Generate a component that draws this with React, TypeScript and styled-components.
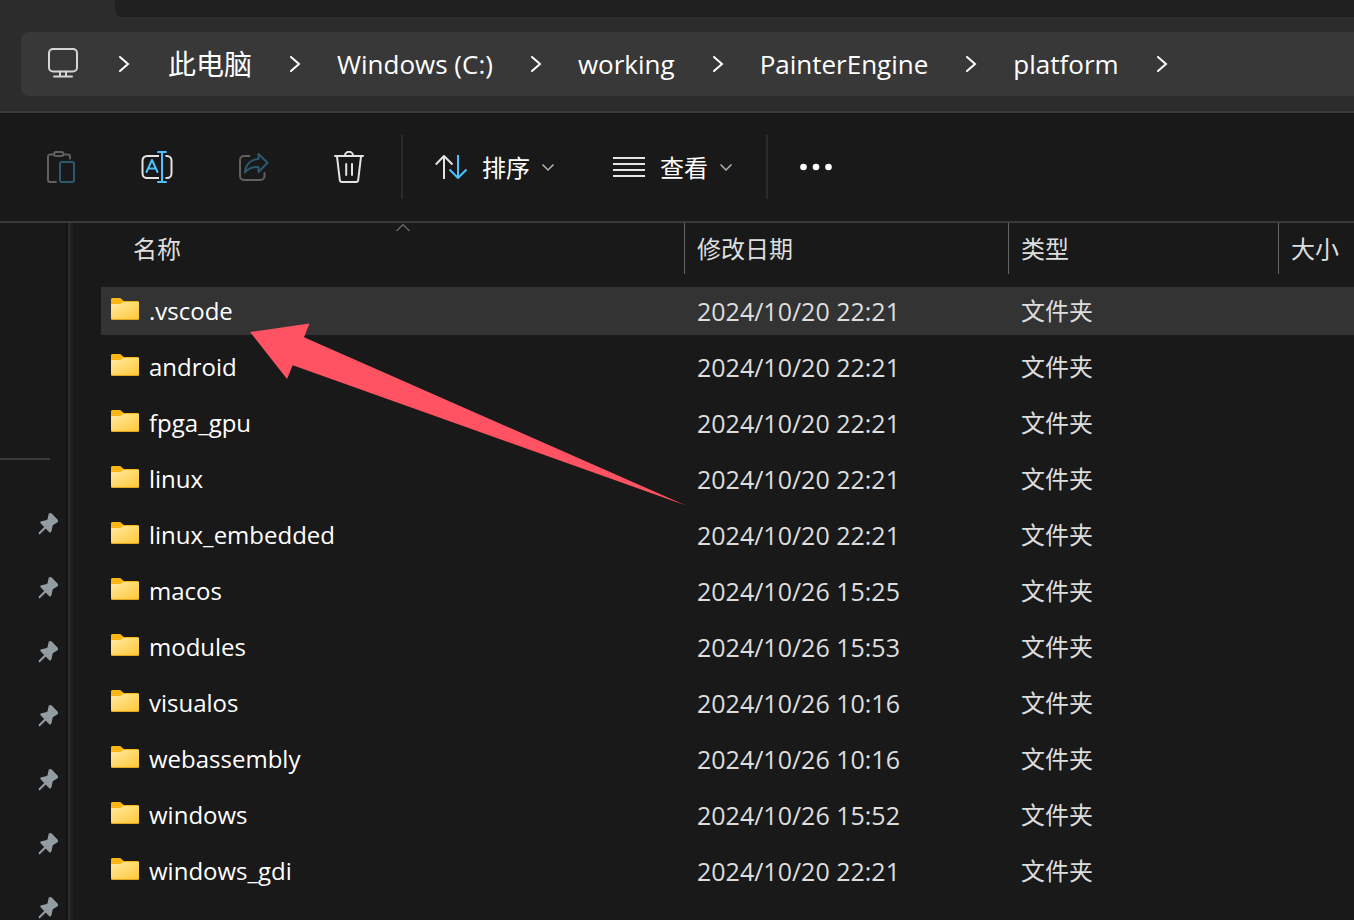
import React from "react";
import styled, { createGlobalStyle } from "styled-components";

const GlobalStyle = createGlobalStyle`
  *, *::before, *::after { box-sizing: border-box; }
  body {
    margin: 0;
    background: #191919;
    color: #ffffff;
    font-family: "Open Sans", "Noto Sans CJK SC", sans-serif;
    font-size: 24px;
  }
  button {
    margin: 0;
    padding: 0;
    border: 0;
    background: none;
    color: inherit;
    font: inherit;
    cursor: default;
  }
`;

const Window = styled.div`
  display: flex;
  flex-direction: column;
  height: 100vh;
  overflow: hidden;
`;

const TopBar = styled.header`
  background: #2c2c2c;
  border-bottom: 2px solid #3a3a3a;
  padding-bottom: 15px;
`;

const TabStrip = styled.div`
  height: 17px;
  margin-left: 115px;
  margin-bottom: 15px;
  background: #202020;
  border-bottom: 1px solid #1d1d1d;
  border-bottom-left-radius: 8px;
`;

const AddressBar = styled.nav`
  display: flex;
  align-items: center;
  gap: 2px;
  height: 64px;
  margin-left: 21px;
  padding-left: 26px;
  background: #383838;
  border-radius: 8px 0 0 8px;
`;

const Crumbs = styled.ol`
  display: flex;
  align-items: center;
  margin: 0;
  padding: 0;
  list-style: none;
`;

const Crumb = styled.li`
  display: flex;
  align-items: center;
`;

const CrumbButton = styled.button`
  font-size: 26px;
  line-height: 36px;
  white-space: nowrap;

  &:lang(zh) {
    font-size: 28px;
  }
`;

const CrumbChevron = styled.button`
  display: flex;
  margin: 0 36px 0 37px;
`;

const Toolbar = styled.div`
  display: flex;
  align-items: center;
  height: 110px;
  padding-left: 13px;
  border-bottom: 2px solid #3a3a3a;
  flex: none;
`;

const IconButton = styled.button`
  display: flex;
  justify-content: center;
  width: 96px;
`;

const Divider = styled.span`
  width: 2px;
  height: 64px;
  margin-left: 4px;
  background: #2b2b2b;
`;

const MenuGroup = styled.div`
  display: flex;
  margin-left: 3px;
`;

const MenuButton = styled.button`
  display: flex;
  align-items: center;
  gap: 15px;
  padding: 0 29px;
  line-height: 36px;
`;

const MenuText = styled.span`
  padding-top: 2px;
`;

const MenuLabel = styled.span`
  display: flex;
  align-items: center;
  gap: 11px;
`;

const MoreButton = styled.button`
  display: flex;
  padding: 0 32px;
`;

const Body = styled.div`
  display: flex;
  flex: 1;
  min-height: 0;
`;

const Sidebar = styled.aside`
  width: 66px;
  flex: none;
  overflow: hidden;
`;

const SidebarRule = styled.hr`
  height: 2px;
  margin: 235px 16px 32px 0;
  border: 0;
  background: #3b3b3b;
`;

const PinList = styled.ul`
  margin: 0;
  padding: 0;
  list-style: none;
`;

const PinItem = styled.li`
  display: flex;
  align-items: center;
  justify-content: flex-end;
  height: 64px;
  padding-right: 6px;
`;

const Splitter = styled.div`
  width: 7px;
  flex: none;
  border-left: 2px solid #141414;
  background: #202020;
  box-shadow: inset 2px 0 #2d2d2d;
`;

const FilePane = styled.main`
  position: relative;
  flex: 1;
  min-width: 0;
  padding-left: 28px;
  overflow: hidden;
`;

const FileTable = styled.table`
  width: 100%;
  table-layout: fixed;
  border-collapse: separate;
  border-spacing: 0;
`;

const Column = styled.col<{ $width?: number }>`
  width: ${(p) => (p.$width ? `${p.$width}px` : "auto")};
`;

const HeadCell = styled.th<{ $inset?: number }>`
  height: 64px;
  padding: 0 0 0 ${(p) => p.$inset ?? 0}px;
  vertical-align: top;
  font-weight: 400;
  text-align: left;
`;

const SortButton = styled.button<{ $last?: boolean }>`
  position: relative;
  display: block;
  width: 100%;
  height: 51px;
  padding-left: 12px;
  border-right: ${(p) => (p.$last ? "0" : "1px solid #636363")};
  color: #dedede;
  line-height: 52px;
  text-align: left;
  white-space: nowrap;
`;

const SortMark = styled.svg`
  position: absolute;
  top: 0;
  left: 50%;
  margin-left: -8px;
`;

const Cell = styled.td`
  height: 56px;
  padding: 0 0 0 12px;
  border-bottom: 8px solid transparent;
  background-clip: padding-box;
  color: #dedede;
  line-height: 48px;
  white-space: nowrap;
`;

const DateCell = styled(Cell)`
  font-size: 25px;
`;

const NameCell = styled(Cell)`
  padding-left: 10px;
  color: #ffffff;
`;

const Row = styled.tr<{ $active?: boolean }>`
  & > td {
    background-color: ${(p) => (p.$active ? "#333333" : "transparent")};
  }
`;

const FileName = styled.span`
  display: flex;
  align-items: center;
  gap: 10px;
`;

const Pointer = styled.svg`
  position: absolute;
  top: 96px;
  left: 172px;
  pointer-events: none;
`;

const GREY = "#616161";
const WHITE = "#e4e4e4";
const BLUE = "#4cc2ff";
const DIM_BLUE = "#2b5970";

const Icon = ({ children }: { children: React.ReactNode }) => (
  <svg width="32" height="32" viewBox="0 0 32 32" fill="none" strokeWidth="2" strokeLinecap="round" strokeLinejoin="round" aria-hidden="true">
    {children}
  </svg>
);

const MonitorIcon = () => (
  <Icon>
    <g stroke="#d6d6d6">
      <rect x="2" y="1" width="28" height="22.500" rx="4" />
      <path d="M13 23.500v5M19 23.500v5M7 28.500h18" />
    </g>
  </Icon>
);

const PasteIcon = () => (
  <Icon>
    <path stroke={GREY} d="M9 3.500H5a2 2 0 0 0-2 2V29a2 2 0 0 0 2 2h6M18.500 3.500H23a2 2 0 0 1 2 2V7.500" />
    <rect stroke={GREY} x="9" y="1" width="9.500" height="4" rx="2" />
    <rect stroke={DIM_BLUE} x="15" y="11" width="14" height="20" rx="2" />
  </Icon>
);

const RenameIcon = () => (
  <Icon>
    <path stroke={WHITE} strokeLinecap="butt" d="M18 5H6a4.500 4.500 0 0 0-4.500 4.500v13A4.500 4.500 0 0 0 6 27h12M24.500 5h1.500a4.500 4.500 0 0 1 4.500 4.500v13A4.500 4.500 0 0 1 26 27h-1.500" />
    <path stroke={BLUE} d="M5.500 21 11 9l5.500 12M7.500 17.500h7" />
    <path stroke={BLUE} d="M21 1v30M17 1h8M17 31h8" />
  </Icon>
);

const ShareIcon = () => (
  <Icon>
    <path stroke={GREY} d="M12.500 5H7a4 4 0 0 0-4 4v16a4 4 0 0 0 4 4h16.500a4 4 0 0 0 4-4v-3" />
    <path stroke={DIM_BLUE} d="M21.500 3 30.500 11.800 21.500 21v-5C15 15.500 11 17.500 8 21.500 8.500 14 13 8.500 21.500 8Z" />
  </Icon>
);

const TrashIcon = () => (
  <Icon>
    <g stroke={WHITE}>
      <path d="M2 5h28M12 4.500a4 3.700 0 0 1 8 0" />
      <path d="M4 5.500 6.800 29a2.200 2.200 0 0 0 2.200 2h14a2.200 2.200 0 0 0 2.200-2L28 5.500" />
      <path d="M13.200 13v11M19 13v11" />
    </g>
  </Icon>
);

const SortIcon = () => (
  <Icon>
    <path stroke={WHITE} strokeLinecap="butt" d="M9 28V5M.8 13.500 9 5l8.500 8.500" />
    <path stroke={BLUE} strokeLinecap="butt" d="M23 4v23M14.500 18.500 23 27l8.500-8.500" />
  </Icon>
);

const LinesIcon = () => (
  <Icon>
    <path stroke={WHITE} strokeLinecap="butt" d="M0 7h32M0 13h32M0 19h32M0 25h32" />
  </Icon>
);

const DotsIcon = () => (
  <Icon>
    <g fill="#ffffff">
      <circle cx="3.500" cy="16" r="3.300" />
      <circle cx="16" cy="16" r="3.300" />
      <circle cx="28.500" cy="16" r="3.300" />
    </g>
  </Icon>
);

const DropChevron = () => (
  <svg width="14" height="14" viewBox="0 0 14 14" fill="none" aria-hidden="true">
    <path stroke="#b4b4b4" strokeWidth="1.500" d="M1.500 4.500 7 10 12.500 4.500" />
  </svg>
);

const PathChevron = () => (
  <svg width="12" height="18" viewBox="0 0 12 18" fill="none" aria-hidden="true">
    <path stroke="#ffffff" strokeWidth="2" strokeLinecap="round" d="M2 2l8 7-8 7" />
  </svg>
);

const PinIcon = () => (
  <svg width="24" height="24" viewBox="0 0 24 24" aria-hidden="true">
    <path
      fill="#929ca3"
      d="M12.700 1.800c.7-1.100 2-1.200 3-.2l5.800 5.800c.9 1 .8 2.300-.3 3l-3.700 2.400c-.7.500-.9 1-1.100 1.900l-1 4.500c-.3 1.300-1.500 1.600-2.400.7l-3.300-3.400-5.500 5.600c-.8.800-2.300-.5-1.400-1.500l5.400-5.700-3.400-3.300c-.9-.9-.6-2 .6-2.300l4.600-1c.8-.2 1.200-.5 1.600-1.300z"
    />
  </svg>
);

const FolderIcon = () => (
  <svg width="28" height="26" viewBox="0 0 28 26" aria-hidden="true">
    <defs>
      <linearGradient id="folder-front" x1="0" y1="0" x2="1" y2="1">
        <stop offset="0" stopColor="#ffe9a2" />
        <stop offset="1" stopColor="#ffc937" />
      </linearGradient>
    </defs>
    <path fill="#fcb614" d="M0 1.500C0 .6.600 0 1.500 0h7c.8 0 1.400.3 2 .9L12.700 3H26.500c.9 0 1.500.6 1.500 1.500V12H0z" />
    <path fill="#e5a320" d="M0 9h28v11.700c0 .7-.5 1.300-1.200 1.300H1.200C.5 22 0 21.400 0 20.700z" />
    <path fill="url(#folder-front)" d="M0 7.200C0 6.500.500 6 1.200 6H9c.8 0 1.400-.3 1.900-.8l.8-.7c.4-.4.800-.5 1.300-.5h13.800c.7 0 1.200.5 1.200 1.200v14.600c0 .7-.5 1.200-1.200 1.200H1.200C.5 21 0 20.500 0 19.800z" />
  </svg>
);

const crumbs = [
  { label: "此电脑", lang: "zh" },
  { label: "Windows (C:)", lang: "en" },
  { label: "working", lang: "en" },
  { label: "PainterEngine", lang: "en" },
  { label: "platform", lang: "en" },
];

const folders = [
  [".vscode", "2024/10/20 22:21"],
  ["android", "2024/10/20 22:21"],
  ["fpga_gpu", "2024/10/20 22:21"],
  ["linux", "2024/10/20 22:21"],
  ["linux_embedded", "2024/10/20 22:21"],
  ["macos", "2024/10/26 15:25"],
  ["modules", "2024/10/26 15:53"],
  ["visualos", "2024/10/26 10:16"],
  ["webassembly", "2024/10/26 10:16"],
  ["windows", "2024/10/26 15:52"],
  ["windows_gdi", "2024/10/20 22:21"],
];

const pins = [0, 1, 2, 3, 4, 5, 6];

export default function App() {
  return (
    <>
      <GlobalStyle />
      <Window>
        <TopBar>
          <TabStrip />
          <AddressBar>
            <MonitorIcon />
            <CrumbChevron aria-label="Root">
              <PathChevron />
            </CrumbChevron>
            <Crumbs>
              {crumbs.map((c) => (
                <Crumb key={c.label}>
                  <CrumbButton lang={c.lang}>{c.label}</CrumbButton>
                  <CrumbChevron aria-label={`Inside ${c.label}`}>
                    <PathChevron />
                  </CrumbChevron>
                </Crumb>
              ))}
            </Crumbs>
          </AddressBar>
        </TopBar>

        <Toolbar role="toolbar">
          <IconButton aria-label="Paste" disabled><PasteIcon /></IconButton>
          <IconButton aria-label="Rename"><RenameIcon /></IconButton>
          <IconButton aria-label="Share" disabled><ShareIcon /></IconButton>
          <IconButton aria-label="Delete"><TrashIcon /></IconButton>
          <Divider />
          <MenuGroup>
            <MenuButton>
              <SortIcon />
              <MenuLabel><MenuText>排序</MenuText><DropChevron /></MenuLabel>
            </MenuButton>
            <MenuButton>
              <LinesIcon />
              <MenuLabel><MenuText>查看</MenuText><DropChevron /></MenuLabel>
            </MenuButton>
          </MenuGroup>
          <Divider />
          <MoreButton aria-label="More"><DotsIcon /></MoreButton>
        </Toolbar>

        <Body>
          <Sidebar>
            <SidebarRule />
            <PinList>
              {pins.map((p) => (
                <PinItem key={p}><PinIcon /></PinItem>
              ))}
            </PinList>
          </Sidebar>
          <Splitter />
          <FilePane>
            <FileTable>
              <colgroup>
                <Column $width={584} />
                <Column $width={324} />
                <Column $width={270} />
                <Column />
              </colgroup>
              <thead>
                <tr>
                  <HeadCell $inset={20}>
                    <SortButton>
                      名称
                      <SortMark width="16" height="10" viewBox="0 0 16 10" fill="none" aria-hidden="true">
                        <path stroke="#a8a8a8" d="M1.500 8 8 1.500 14.500 8" />
                      </SortMark>
                    </SortButton>
                  </HeadCell>
                  <HeadCell><SortButton>修改日期</SortButton></HeadCell>
                  <HeadCell><SortButton>类型</SortButton></HeadCell>
                  <HeadCell><SortButton $last>大小</SortButton></HeadCell>
                </tr>
              </thead>
              <tbody>
                {folders.map(([name, date], i) => (
                  <Row key={name} $active={i === 0}>
                    <NameCell>
                      <FileName><FolderIcon />{name}</FileName>
                    </NameCell>
                    <DateCell>{date}</DateCell>
                    <Cell>文件夹</Cell>
                    <Cell />
                  </Row>
                ))}
              </tbody>
            </FileTable>
            <Pointer width="444" height="190" viewBox="0 0 444 190" aria-hidden="true">
              <path fill="#ff5263" d="M5 13 64.500 4.500 59 18.300 441 186.500 47.700 46.300 42 60Z" />
            </Pointer>
          </FilePane>
        </Body>
      </Window>
    </>
  );
}
